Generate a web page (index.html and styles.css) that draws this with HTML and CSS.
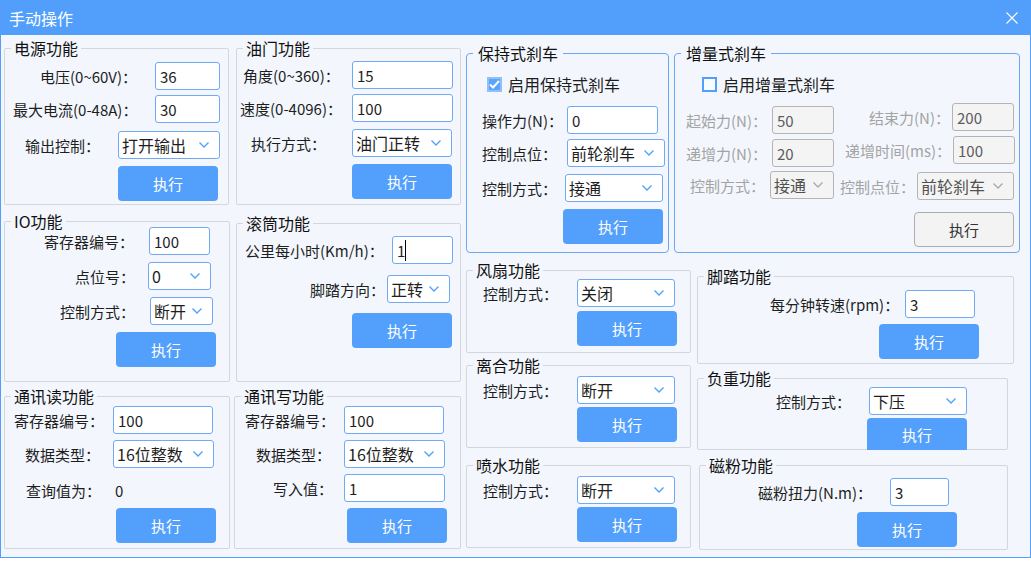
FILE: index.html
```html
<!DOCTYPE html>
<html lang="zh-CN">
  <head>
    <meta charset="UTF-8" />
    <meta name="viewport" content="width=device-width, initial-scale=1.0" />
    <title>手动操作</title>
    <link rel="stylesheet" href="styles.css">
  </head>
  <body>
    <div class="window">
      <div class="titlebar">
        <span class="title">手动操作</span>
        <svg class="close" width="12" height="12" viewBox="0 0 12 12"><path d="M0.5 0.5 L11.5 11.5 M11.5 0.5 L0.5 11.5" stroke="#fff" stroke-width="1.1" fill="none"/></svg>
      </div>

      <div class="content">
        <!-- 第一列 -->
        <div class="col col1">
          <fieldset class="grp power">
            <legend>电源功能</legend>
            <div class="row pw1"><label>电压(0~60V)：</label><input class="ctl" value="36"></div>
            <div class="row pw2"><label>最大电流(0-48A)：</label><input class="ctl" value="30"></div>
            <div class="row pw3"><label>输出控制：</label><div class="ctl sel"><span>打开输出</span><svg width="10" height="6" viewBox="0 0 10 6"><polyline points="0.5,0.5 5,5 9.5,0.5"/></svg></div></div>
            <button class="btn">执行</button>
          </fieldset>

          <fieldset class="grp io">
            <legend>IO功能</legend>
            <div class="row io1"><label>寄存器编号：</label><input class="ctl" value="100"></div>
            <div class="row io2"><label>点位号：</label><div class="ctl sel"><span>0</span><svg width="10" height="6" viewBox="0 0 10 6"><polyline points="0.5,0.5 5,5 9.5,0.5"/></svg></div></div>
            <div class="row io3"><label>控制方式：</label><div class="ctl sel"><span>断开</span><svg width="10" height="6" viewBox="0 0 10 6"><polyline points="0.5,0.5 5,5 9.5,0.5"/></svg></div></div>
            <button class="btn">执行</button>
          </fieldset>

          <fieldset class="grp rd">
            <legend>通讯读功能</legend>
            <div class="row rd1"><label>寄存器编号：</label><input class="ctl" value="100"></div>
            <div class="row rd2"><label>数据类型：</label><div class="ctl sel"><span>16位整数</span><svg width="10" height="6" viewBox="0 0 10 6"><polyline points="0.5,0.5 5,5 9.5,0.5"/></svg></div></div>
            <div class="row rd3"><label>查询值为：</label><span class="val">0</span></div>
            <button class="btn">执行</button>
          </fieldset>
        </div>

        <!-- 第二列 -->
        <div class="col col2">
          <fieldset class="grp th">
            <legend>油门功能</legend>
            <div class="row th1"><label>角度(0~360)：</label><input class="ctl" value="15"></div>
            <div class="row th2"><label>速度(0-4096)：</label><input class="ctl" value="100"></div>
            <div class="row th3"><label>执行方式：</label><div class="ctl sel"><span>油门正转</span><svg width="10" height="6" viewBox="0 0 10 6"><polyline points="0.5,0.5 5,5 9.5,0.5"/></svg></div></div>
            <button class="btn">执行</button>
          </fieldset>

          <fieldset class="grp dr">
            <legend>滚筒功能</legend>
            <div class="row dr1"><label>公里每小时(Km/h)：</label><span class="ctl caret"><input value="1"></span></div>
            <div class="row dr2"><label>脚踏方向：</label><div class="ctl sel"><span>正转</span><svg width="10" height="6" viewBox="0 0 10 6"><polyline points="0.5,0.5 5,5 9.5,0.5"/></svg></div></div>
            <button class="btn">执行</button>
          </fieldset>

          <fieldset class="grp wr">
            <legend>通讯写功能</legend>
            <div class="row wr1"><label>寄存器编号：</label><input class="ctl" value="100"></div>
            <div class="row wr2"><label>数据类型：</label><div class="ctl sel"><span>16位整数</span><svg width="10" height="6" viewBox="0 0 10 6"><polyline points="0.5,0.5 5,5 9.5,0.5"/></svg></div></div>
            <div class="row wr3"><label>写入值：</label><input class="ctl" value="1"></div>
            <button class="btn">执行</button>
          </fieldset>
        </div>

        <!-- 右侧 -->
        <div class="right">
          <div class="brakes">
            <fieldset class="grp blue hold">
              <legend>保持式刹车</legend>
              <div class="check"><span class="box on"><svg width="11" height="9" viewBox="0 0 11 9"><polyline points="1,4.5 4,7.5 10,1"/></svg></span>启用保持式刹车</div>
              <div class="row hd1"><label>操作力(N)：</label><input class="ctl" value="0"></div>
              <div class="row hd2"><label>控制点位：</label><div class="ctl sel"><span>前轮刹车</span><svg width="10" height="6" viewBox="0 0 10 6"><polyline points="0.5,0.5 5,5 9.5,0.5"/></svg></div></div>
              <div class="row hd3"><label>控制方式：</label><div class="ctl sel"><span>接通</span><svg width="10" height="6" viewBox="0 0 10 6"><polyline points="0.5,0.5 5,5 9.5,0.5"/></svg></div></div>
              <button class="btn">执行</button>
            </fieldset>

            <fieldset class="grp blue inc">
              <legend>增量式刹车</legend>
              <div class="check"><span class="box"></span>启用增量式刹车</div>
              <div class="inc-cols">
                <div class="inc-left">
                  <div class="row ic1"><label>起始力(N)：</label><input class="ctl" value="50" disabled></div>
                  <div class="row ic2"><label>递增力(N)：</label><input class="ctl" value="20" disabled></div>
                  <div class="row ic3"><label>控制方式：</label><div class="ctl sel off"><span>接通</span><svg width="10" height="6" viewBox="0 0 10 6"><polyline points="0.5,0.5 5,5 9.5,0.5"/></svg></div></div>
                </div>
                <div class="inc-right">
                  <div class="row ic4"><label>结束力(N)：</label><input class="ctl" value="200" disabled></div>
                  <div class="row ic5"><label>递增时间(ms)：</label><input class="ctl" value="100" disabled></div>
                  <div class="row ic6"><label>控制点位：</label><div class="ctl sel off"><span>前轮刹车</span><svg width="10" height="6" viewBox="0 0 10 6"><polyline points="0.5,0.5 5,5 9.5,0.5"/></svg></div></div>
                  <button class="btn" disabled>执行</button>
                </div>
              </div>
            </fieldset>
          </div>

          <div class="lower">
            <div class="col col3">
              <fieldset class="grp fan">
                <legend>风扇功能</legend>
                <div class="row"><label>控制方式：</label><div class="ctl sel"><span>关闭</span><svg width="10" height="6" viewBox="0 0 10 6"><polyline points="0.5,0.5 5,5 9.5,0.5"/></svg></div></div>
                <button class="btn">执行</button>
              </fieldset>
              <fieldset class="grp clutch">
                <legend>离合功能</legend>
                <div class="row"><label>控制方式：</label><div class="ctl sel"><span>断开</span><svg width="10" height="6" viewBox="0 0 10 6"><polyline points="0.5,0.5 5,5 9.5,0.5"/></svg></div></div>
                <button class="btn">执行</button>
              </fieldset>
              <fieldset class="grp spray">
                <legend>喷水功能</legend>
                <div class="row"><label>控制方式：</label><div class="ctl sel"><span>断开</span><svg width="10" height="6" viewBox="0 0 10 6"><polyline points="0.5,0.5 5,5 9.5,0.5"/></svg></div></div>
                <button class="btn">执行</button>
              </fieldset>
            </div>

            <div class="col col4">
              <fieldset class="grp ped">
                <legend>脚踏功能</legend>
                <div class="row pd1"><label>每分钟转速(rpm)：</label><input class="ctl" value="3"></div>
                <button class="btn">执行</button>
              </fieldset>
              <fieldset class="grp load">
                <legend>负重功能</legend>
                <div class="row ld1"><label>控制方式：</label><div class="ctl sel"><span>下压</span><svg width="10" height="6" viewBox="0 0 10 6"><polyline points="0.5,0.5 5,5 9.5,0.5"/></svg></div></div>
                <button class="btn">执行</button>
              </fieldset>
              <fieldset class="grp mag">
                <legend>磁粉功能</legend>
                <div class="row mg1"><label>磁粉扭力(N.m)：</label><input class="ctl" value="3"></div>
                <button class="btn">执行</button>
              </fieldset>
            </div>
          </div>
        </div>
      </div>
    </div>
  </body>
</html>
```

FILE: styles.css
```css
* {
  box-sizing: border-box;
}
body {
  margin: 0;
  background: #fff;
  font-family: "Noto Sans CJK SC", "Noto Sans", sans-serif;
  font-size: 15px;
  color: #1e1e1e;
}

.window {
  width: 1031px;
  height: 558px;
  background: #f3f7fd;
  border-left: 1px solid #519ffb;
  border-right: 1px solid #519ffb;
  border-bottom: 1px solid #519ffb;
}
.titlebar {
  height: 35px;
  background: #519ffb;
  display: flex;
  align-items: center;
  justify-content: space-between;
  padding: 0 12px 0 8px;
  color: #fff;
}
.title {
  font-size: 16px;
}
.close {
  margin-top: 1px;
}

.content {
  display: flex;
  align-items: flex-start;
  padding-left: 3px;
}
.col {
  display: flex;
  flex-direction: column;
}
.col1 { width: 226px; }
.col2 { width: 227px; margin-left: 4px; }
.right { margin-left: 5px; }
.brakes { display: flex; margin-top: 10px; }
.lower { display: flex; }
.col3 { width: 225px; }
.col4 { margin-left: 6px; }

/* groupbox */
.grp {
  margin: 0;
  padding: 0;
  min-width: 0;
  border: 1px solid #d3d7dc;
  border-radius: 2px;
}
.grp legend {
  margin-left: 6px;
  padding: 0 3px;
  font-size: 16px;
  line-height: 16px;
  color: #111;
}
.grp.blue {
  border-color: #6aa8f5;
  border-radius: 4px;
}
.grp.blue legend {
  padding: 0 5px;
}

.power { margin-top: 5px; width: 225px; height: 165px; }
.io { margin-top: 8px; width: 226px; height: 169px; }
.rd { margin-top: 6px; width: 226px; height: 161px; }
.th { margin-top: 5px; margin-left: 2px; width: 225px; height: 165px; }
.dr { margin-top: 10px; margin-left: 2px; width: 225px; height: 167px; }
.wr { margin-top: 6px; width: 227px; height: 161px; }
.hold { width: 203px; height: 208px; }
.inc { margin-left: 5px; width: 346px; height: 208px; }
.fan { margin-top: 9px; height: 91px; }
.clutch { margin-top: 4px; height: 91px; }
.spray { margin-top: 9px; height: 91px; }
.ped { margin-top: 15px; width: 317px; height: 96px; }
.load { margin-top: 6px; width: 311px; height: 80px; }
.mag { margin-top: 7px; margin-left: 2px; width: 309px; height: 93px; }

/* rows */
.row {
  display: flex;
  align-items: center;
  height: 28px;
}
.row label {
  flex: none;
  white-space: nowrap;
}
.ctl {
  flex: none;
  height: 28px;
}
input.ctl,
.caret input {
  border: 1px solid #70a9f4;
  border-radius: 3px;
  background: #fff;
  padding: 0 0 0 4px;
  font: inherit;
  color: #1e1e1e;
  outline: none;
}
input.ctl:disabled {
  background: #f4f4f4;
  border-color: #b4b4b4;
  color: #5c5c5c;
}
.caret {
  position: relative;
}
.caret input {
  width: 100%;
  height: 28px;
}
.caret::after {
  content: "";
  position: absolute;
  left: 13px;
  top: 4px;
  width: 1px;
  height: 21px;
  background: #000;
}
.sel {
  display: flex;
  align-items: center;
  justify-content: space-between;
  border: 1px solid #70a9f4;
  border-radius: 3px;
  background: #fff;
  padding: 0 10px 0 3px;
  font-size: 16px;
  white-space: nowrap;
}
.sel svg polyline {
  fill: none;
  stroke: #4f9ffc;
  stroke-width: 1.3;
}
.sel.off {
  background: #f4f4f4;
  border-color: #b4b4b4;
  color: #505050;
}
.sel.off svg polyline {
  stroke: #a8a8a8;
}
.val {
  margin-left: 5px;
}

.btn {
  display: block;
  width: 100px;
  height: 35px;
  border: none;
  border-radius: 4px;
  background: #52a0fc;
  color: #fff;
  font: inherit;
  font-size: 15px;
}
.btn:disabled {
  background: #f3f3f3;
  border: 1px solid #adadad;
  color: #333;
}

/* checkbox */
.check {
  display: flex;
  align-items: center;
  height: 20px;
  margin-top: 13px;
  font-size: 16px;
}
.box {
  width: 15px;
  height: 15px;
  margin-right: 6px;
  border: 2px solid #4f9ffc;
  background: #f8fbff;
  display: flex;
  align-items: center;
  justify-content: center;
}
.box.on {
  background: #5aa5fb;
  border-color: #8fc0fa;
}
.box svg polyline {
  fill: none;
  stroke: #fff;
  stroke-width: 2;
}
.hold .check { margin-left: 20px; }
.inc .check { margin-left: 27px; }

/* 电源 */
.pw1 { margin-top: 6px; }
.pw1 label { width: 150px; padding-left: 35px; }
.pw1 .ctl { width: 65px; }
.pw2 { margin-top: 5px; }
.pw2 label { width: 150px; padding-left: 8px; }
.pw2 .ctl { width: 65px; }
.pw3 { margin-top: 8px; }
.pw3 label { width: 113px; padding-left: 20px; }
.pw3 .ctl { width: 102px; }
.power .btn { margin: 7px 0 0 113px; }

/* IO */
.io1 { margin-top: -2px; }
.io1 label { width: 144px; padding-left: 39px; }
.io1 .ctl { width: 61px; }
.io2 { margin-top: 7px; }
.io2 label { width: 143px; padding-left: 70px; }
.io2 .ctl { width: 63px; }
.io3 { margin-top: 7px; }
.io3 label { width: 145px; padding-left: 55px; }
.io3 .ctl { width: 63px; }
.io .btn { margin: 7px 0 0 111px; }

/* 通讯读 */
.rd1 { margin-top: 2px; }
.rd1 label { width: 108px; padding-left: 9px; }
.rd1 .ctl { width: 100px; }
.rd2 { margin-top: 6px; }
.rd2 label { width: 108px; padding-left: 20px; }
.rd2 .ctl { width: 101px; }
.rd3 { margin-top: 8px; }
.rd3 label { width: 105px; padding-left: 21px; }
.rd .btn { margin: 4px 0 0 111px; }

/* 油门 */
.th1 { margin-top: 5px; }
.th1 label { width: 115px; padding-left: 6px; }
.th1 .ctl { width: 101px; }
.th2 { margin-top: 5px; }
.th2 label { width: 115px; padding-left: 3px; }
.th2 .ctl { width: 101px; }
.th3 { margin-top: 7px; }
.th3 label { width: 115px; padding-left: 14px; }
.th3 .ctl { width: 100px; }
.th .btn { margin: 7px 0 0 115px; }

/* 滚筒 */
.dr1 { margin-top: 5px; }
.dr1 label { width: 155px; padding-left: 8px; }
.dr1 .ctl { width: 61px; }
.dr2 { margin-top: 11px; }
.dr2 label { width: 150px; padding-left: 73px; }
.dr2 .ctl { width: 63px; }
.dr .btn { margin: 10px 0 0 115px; }

/* 通讯写 */
.wr1 { margin-top: 2px; }
.wr1 label { width: 109px; padding-left: 10px; }
.wr1 .ctl { width: 100px; }
.wr2 { margin-top: 6px; }
.wr2 label { width: 109px; padding-left: 21px; }
.wr2 .ctl { width: 101px; }
.wr3 { margin-top: 6px; }
.wr3 label { width: 109px; padding-left: 38px; }
.wr3 .ctl { width: 101px; }
.wr .btn { margin: 6px 0 0 112px; }

/* 保持式刹车 */
.hd1 { margin-top: 12px; }
.hd1 label { width: 100px; padding-left: 15px; }
.hd1 .ctl { width: 91px; }
.hd2 { margin-top: 5px; }
.hd2 label { width: 100px; padding-left: 15px; }
.hd2 .ctl { width: 98px; }
.hd3 { margin-top: 7px; }
.hd3 label { width: 98px; padding-left: 15px; }
.hd3 .ctl { width: 98px; }
.hold .btn { margin: 7px 0 0 96px; }

/* 增量式刹车 */
.inc-cols { display: flex; }
.inc-left { width: 165px; }
.inc label { color: #a3a3a3; }
.ic1 { margin-top: 12px; }
.ic1 label { width: 97px; padding-left: 11px; }
.ic1 .ctl { width: 62px; }
.ic2 { margin-top: 5px; }
.ic2 label { width: 97px; padding-left: 11px; }
.ic2 .ctl { width: 62px; }
.ic3 { margin-top: 4px; }
.ic3 label { width: 95px; padding-left: 15px; }
.ic3 .ctl { width: 64px; }
.ic4 { margin-top: 9px; }
.ic4 label { width: 112px; padding-left: 29px; }
.ic4 .ctl { width: 62px; }
.ic5 { margin-top: 5px; }
.ic5 label { width: 113px; padding-left: 5px; }
.ic5 .ctl { width: 62px; }
.ic6 { margin-top: 8px; }
.ic6 label { width: 77px; }
.ic6 .ctl { width: 97px; }
.inc .btn { margin: 12px 0 0 74px; }

/* 风扇 / 离合 / 喷水 */
.col3 .row label { width: 110px; padding-left: 16px; }
.col3 .row .ctl { width: 98px; }
.fan .row { margin-top: 1px; }
.fan .btn { margin: 4px 0 0 110px; }
.clutch .row, .spray .row { margin-top: 3px; }
.clutch .btn, .spray .btn { margin: 3px 0 0 110px; }

/* 脚踏 */
.pd1 { margin-top: 6px; }
.pd1 label { width: 207px; padding-left: 72px; }
.pd1 .ctl { width: 70px; }
.ped .btn { margin: 6px 0 0 181px; }

/* 负重 */
.ld1 { margin-top: 1px; }
.ld1 label { width: 171px; padding-left: 78px; }
.ld1 .ctl { width: 98px; }
.load .btn { margin: 3px 0 0 169px; height: 32px; border-radius: 4px 4px 0 0; }

/* 磁粉 */
.mg1 { margin-top: 5px; }
.mg1 label { width: 190px; padding-left: 58px; }
.mg1 .ctl { width: 59px; }
.mag .btn { margin: 6px 0 0 157px; }
```
